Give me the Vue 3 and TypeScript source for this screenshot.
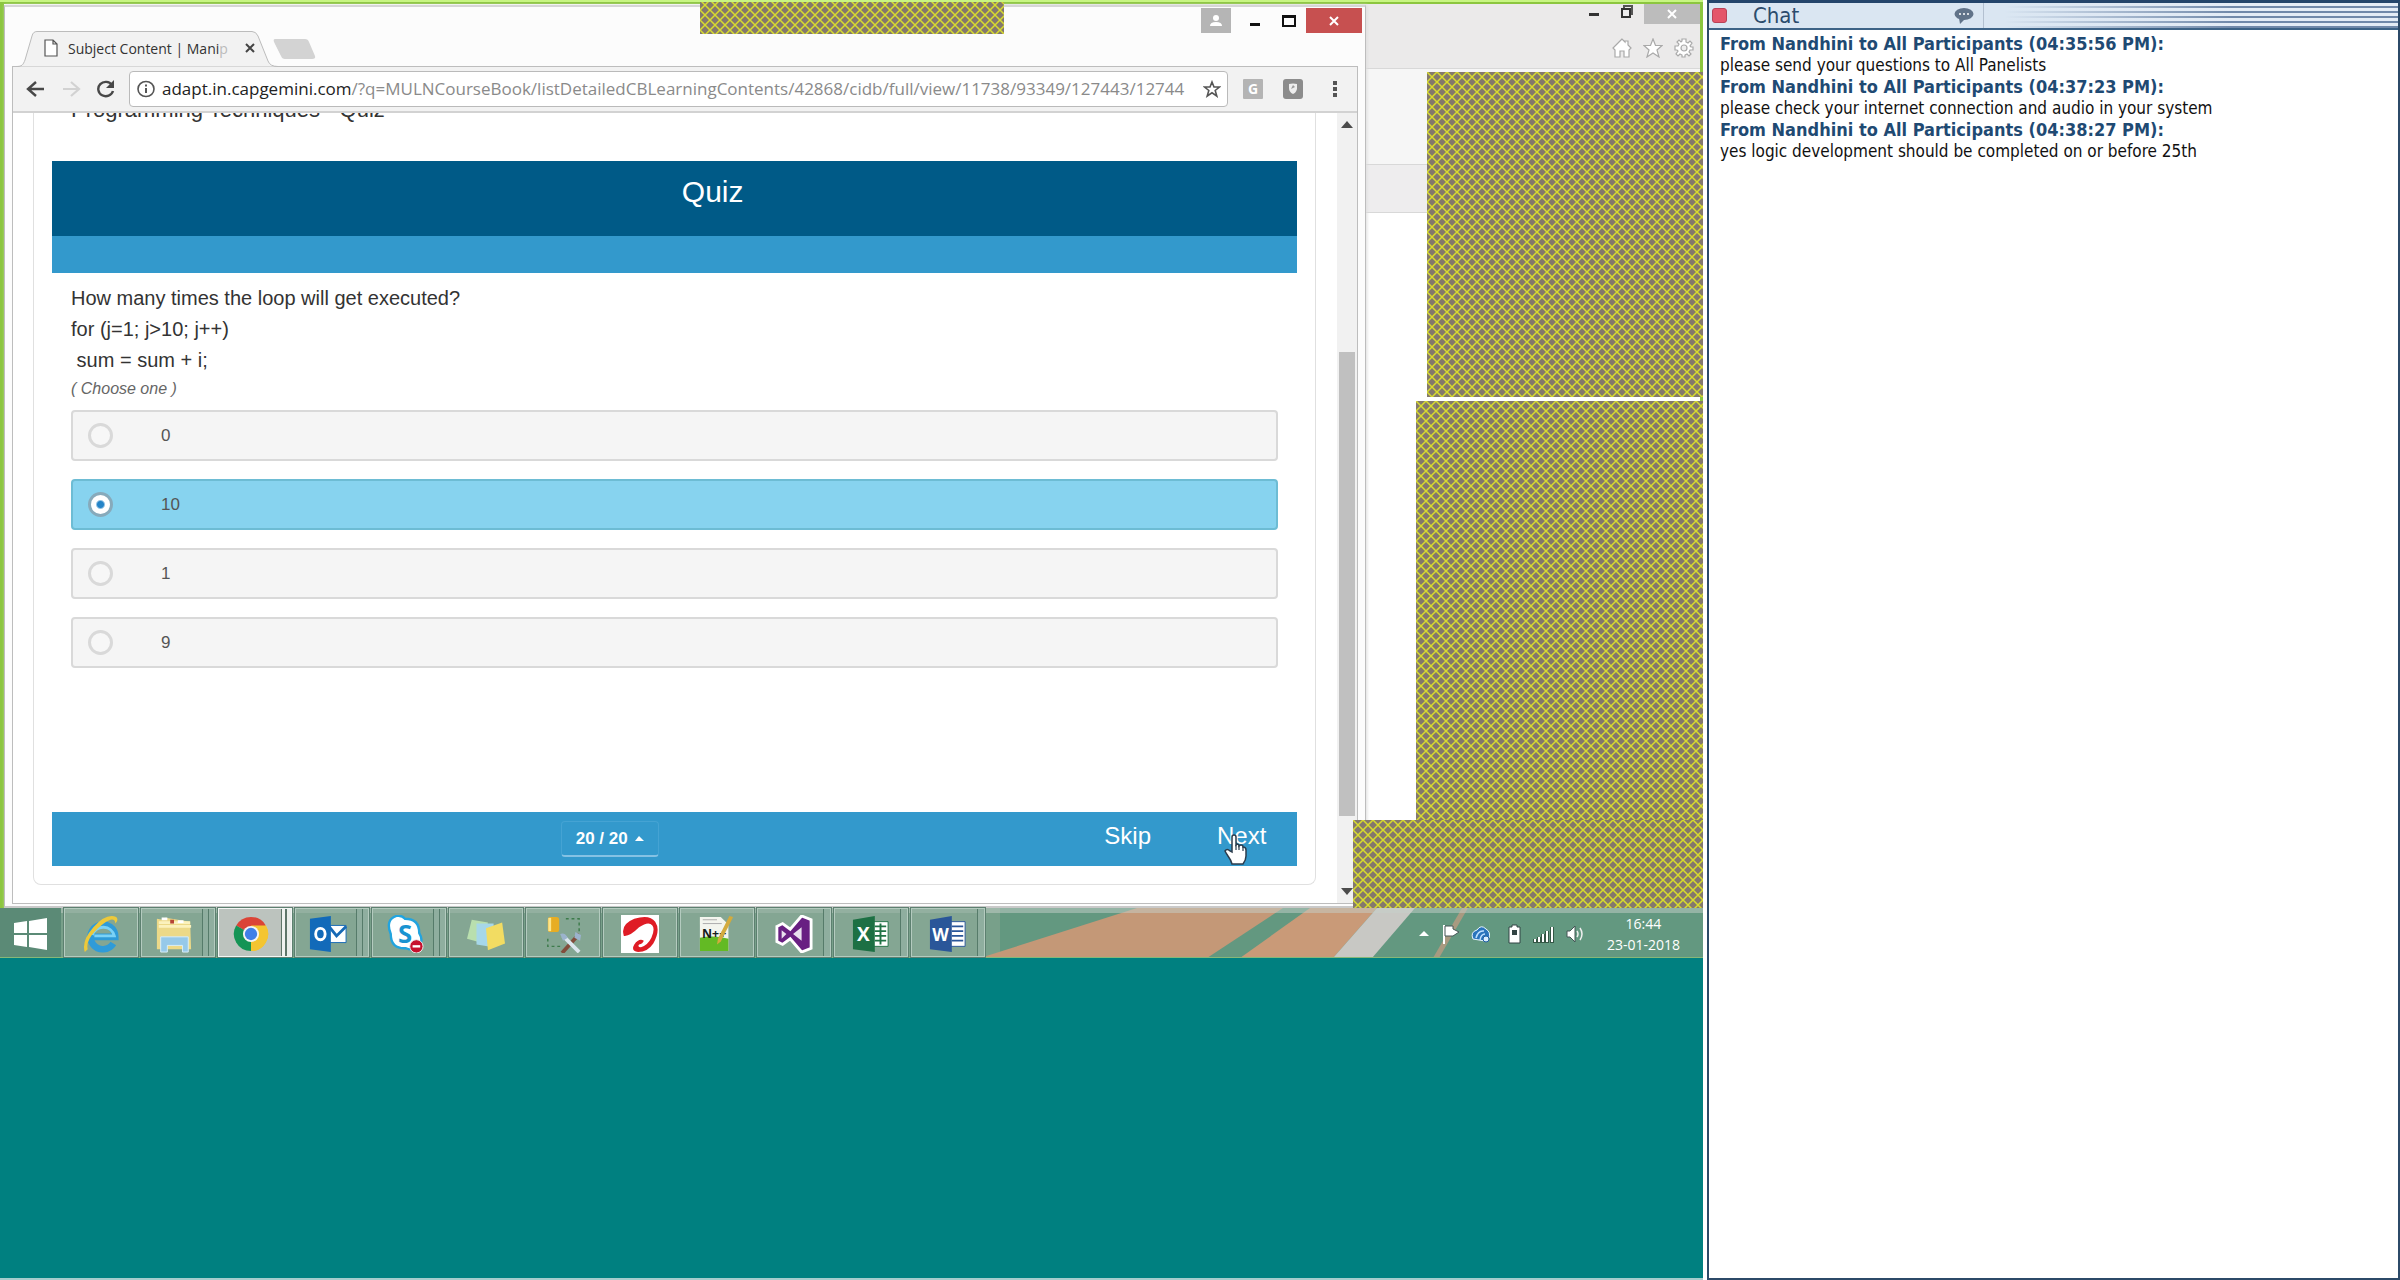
<script setup lang="ts">
import { ref } from 'vue'

interface Option { id: string; label: string }
interface Message { id: number; from: string; text: string }
interface TaskApp { id: string; name: string; active?: boolean; stack?: number }

const options: Option[] = [
  { id: 'opt-a', label: '0' },
  { id: 'opt-b', label: '10' },
  { id: 'opt-c', label: '1' },
  { id: 'opt-d', label: '9' },
]
const selected = ref('opt-b')

const messages: Message[] = [
  { id: 1, from: 'From Nandhini to All Participants (04:35:56 PM):', text: 'please send your questions to All Panelists' },
  { id: 2, from: 'From Nandhini to All Participants (04:37:23 PM):', text: 'please check your internet connection and audio in your system' },
  { id: 3, from: 'From Nandhini to All Participants (04:38:27 PM):', text: 'yes logic development should be completed on or before 25th' },
]

const apps: TaskApp[] = [
  { id: 'ie', name: 'Internet Explorer' },
  { id: 'files', name: 'File Explorer', stack: 2 },
  { id: 'chrome', name: 'Chrome', active: true, stack: 2 },
  { id: 'outlook', name: 'Outlook', stack: 2 },
  { id: 'skype', name: 'Skype', stack: 2 },
  { id: 'notes', name: 'Sticky Notes' },
  { id: 'tools', name: 'Database Tools' },
  { id: 'airtel', name: 'Airtel' },
  { id: 'npp', name: 'Notepad++' },
  { id: 'vs', name: 'Visual Studio', stack: 1 },
  { id: 'excel', name: 'Excel', stack: 1 },
  { id: 'word', name: 'Word', stack: 1 },
]
</script>

<template>
  <div class="meeting">
    <main class="shared">
      <div class="screen">
        <section class="ie-window" aria-label="Background browser">
          <div class="ie-title">
            <div class="ie-controls">
              <button class="plain" aria-label="Minimize"><svg width="12" height="20"><rect x="1" y="9" width="10" height="3" fill="#333" /></svg></button>
              <button class="plain" aria-label="Restore"><svg width="14" height="20"><path d="M4 5V2h8v8h-2" fill="none" stroke="#555" stroke-width="2" /><rect x="2" y="5" width="8" height="8" fill="#eee" stroke="#333" stroke-width="2" /></svg></button>
              <button class="ie-close" aria-label="Close"><svg width="12" height="12"><path d="M2 2l8 8M10 2l-8 8" stroke="#fff" stroke-width="2" /></svg></button>
            </div>
            <div class="ie-icons">
              <svg width="20" height="20" viewBox="0 0 20 20"><path d="M10 1L1 10l2 2v7h5v-6h4v6h5v-7l2-2-3-3V3h-3v1z" fill="#fff" stroke="#a9a9a9" stroke-width="1.2" /></svg>
              <svg width="20" height="20" viewBox="0 0 20 20"><path d="M10 1l2.500 6.500H19l-5 4.500 2 7-6-4-6 4 2-7-5-4.500h6.500z" fill="#fff" stroke="#a9a9a9" stroke-width="1.200" /></svg>
              <svg width="20" height="20" viewBox="0 0 20 20"><path d="M8 1h4v3l2 1 2-2 2 2-2 3 1 1h2v3h-3l-1 2 2 2-2 2-2-2-2 1v2H8v-2l-2-1-2 2-2-2 2-3-1-1H1V8h3l1-2-2-2 2-2 2 2 1-1z" fill="#fff" stroke="#a9a9a9" stroke-width="1.200" /><circle cx="10" cy="10" r="3" fill="#eee" stroke="#a9a9a9" stroke-width="1.200" /></svg>
            </div>
          </div>
          <div class="ie-bar"></div>
          <div class="ie-strip"></div>
        </section>

        <section class="chrome-window" aria-label="Browser">
          <div class="tab-strip">
            <div class="tab">
              <svg class="tab-shape" viewBox="0 0 262 36" preserveAspectRatio="none"><path d="M0 35.500C6 35.500 7 34 9 29L16 5Q17 .5 21 .5H236Q240 .5 242 5L252 30Q254 35.500 262 35.500" fill="#f2f2f2" stroke="#bcbcbc" /></svg>
              <svg class="page-icon" width="14" height="18" viewBox="0 0 14 18"><path d="M1 1h8l4 4v12H1zM9 1v4h4" fill="#fff" stroke="#555" stroke-width="1.200" /></svg>
              <span class="tab-title">Subject Content | Mani<span class="faded">p</span></span>
              <button class="plain tab-close" aria-label="Close tab"><svg width="12" height="12"><path d="M2 2l8 8M10 2l-8 8" stroke="#444" stroke-width="2" /></svg></button>
            </div>
            <button class="plain new-tab" aria-label="New tab"><svg width="44" height="22" viewBox="0 0 44 22"><path d="M3 1h30q3 0 4 3l6 14q1 3-3 3H13q-3 0-4-3L2 4q-1-3 1-3z" fill="#d3d3d3" /></svg></button>
            <div class="win-controls">
              <button class="profile" aria-label="Profile"><svg width="14" height="14"><circle cx="7" cy="4" r="3" fill="#fff" /><path d="M1 12q0-4 6-4t6 4z" fill="#fff" /></svg></button>
              <button class="plain" aria-label="Minimize window"><svg width="12" height="26"><rect x="1" y="15" width="10" height="3" fill="#111" /></svg></button>
              <button class="plain" aria-label="Maximize window"><svg width="14" height="26"><path d="M1 8h12v10H1z" fill="none" stroke="#111" stroke-width="2" /><path d="M0 9h14" stroke="#111" stroke-width="2" /></svg></button>
              <button class="close" aria-label="Close window"><svg width="12" height="12"><path d="M2 2l8 8M10 2l-8 8" stroke="#fff" stroke-width="2" /></svg></button>
            </div>
          </div>

          <div class="frame">
            <div class="toolbar">
              <button class="plain" aria-label="Back"><svg width="20" height="18" viewBox="0 0 20 18"><path d="M18 9H3M10 2L2 9l8 7" fill="none" stroke="#484848" stroke-width="2.400" /></svg></button>
              <button class="plain" aria-label="Forward"><svg width="20" height="18" viewBox="0 0 20 18"><path d="M2 9h15M10 2l8 7-8 7" fill="none" stroke="#d2d2d2" stroke-width="2.200" /></svg></button>
              <button class="plain" aria-label="Reload"><svg width="20" height="18" viewBox="0 0 20 18"><path d="M16 5A7.500 7.200 0 1 0 17 11" fill="none" stroke="#484848" stroke-width="2.400" /><path d="M18 0v8h-8z" fill="#484848" /></svg></button>
              <div class="omnibox">
                <svg width="20" height="18" viewBox="0 0 20 18"><ellipse cx="10" cy="9" rx="8" ry="7.500" fill="none" stroke="#555" stroke-width="1.600" /><path d="M10 8v5M10 4.500v2" stroke="#555" stroke-width="2" /></svg>
                <a class="url" href="#"><span class="host">adapt.in.capgemini.com</span>/?q=MULNCourseBook/listDetailedCBLearningContents/42868/cidb/full/view/11738/93349/127443/12744</a>
                <button class="plain" aria-label="Bookmark"><svg width="18" height="18" viewBox="0 0 18 18"><path d="M9 2l2 5h5.500l-4.300 3.500 1.600 5.500L9 12.800 4.200 16l1.600-5.500L1.500 7H7z" fill="none" stroke="#555" stroke-width="1.600" /></svg></button>
              </div>
              <button class="ext" aria-label="Extension"><svg width="20" height="20"><rect width="20" height="20" rx="1" fill="#b4b4b4" /><text x="10" y="15" text-anchor="middle" class="glyph" font-size="14">G</text></svg></button>
              <button class="ext" aria-label="Shield extension"><svg width="20" height="20"><rect width="20" height="20" rx="3" fill="#8c8c8c" /><path d="M6 5q4-1 8 0v5q-1 4-4 5-4-2-4-6z" fill="#eee" /><path d="M8 10l2-4 2 2z" fill="#999" /></svg></button>
              <button class="plain menu" aria-label="Menu"><svg width="6" height="18"><rect x="1" y="1" width="4" height="4" fill="#555" /><rect x="1" y="7" width="4" height="4" fill="#555" /><rect x="1" y="13" width="4" height="4" fill="#555" /></svg></button>
            </div>

            <div class="viewport">
              <div class="page">
                <div class="card">
                  <h1>Programming Techniques - Quiz</h1>
                  <div class="quiz">
                    <h2>Quiz</h2>
                    <div class="band"></div>
                    <fieldset>
                      <legend>
                        <span>How many times the loop will get executed?</span>
                        <span>for (j=1; j&gt;10; j++)</span>
                        <span>&nbsp;sum = sum + i;</span>
                        <em>( Choose one )</em>
                      </legend>
                      <label v-for="o in options" :key="o.id" class="option" :class="{ on: selected === o.id }" :for="o.id">
                        <input :id="o.id" v-model="selected" type="radio" name="answer" :value="o.id">
                        <span>{{ o.label }}</span>
                      </label>
                    </fieldset>
                    <div class="quiz-foot">
                      <button class="counter">20 / 20 <svg width="9" height="5"><path d="M0 5l4-5 5 5z" fill="#fff" /></svg></button>
                      <div class="nav">
                        <button class="nav-btn">Skip</button>
                        <button class="nav-btn">Next
                          <svg class="hand" width="24" height="32" viewBox="0 0 24 32"><path d="M8 3q0-2 2-2t2 2v8l1-1q2 0 2 2 1-1 2-1 2 0 2 2 3 0 3 3v6q0 4-3 8H8q-1-4-4-8-2-3-3-5 2-3 5 0l2 1z" fill="#fff" stroke="#2c3c4c" stroke-width="1.500" /><path d="M12 11v5M15 12v4M19 13v4" stroke="#2c3c4c" stroke-width="1.200" /></svg>
                        </button>
                      </div>
                    </div>
                  </div>
                </div>
              </div>
              <div class="scrollbar">
                <svg width="12" height="7"><path d="M0 7l6-7 6 7z" fill="#4c4c4c" /></svg>
                <div class="track"><div class="thumb"></div></div>
                <svg width="12" height="7"><path d="M0 0h12l-6 7z" fill="#4c4c4c" /></svg>
              </div>
            </div>
          </div>
        </section>

        <svg width="0" height="0" class="defs"><defs><pattern id="hatch" width="10" height="10" patternUnits="userSpaceOnUse"><rect width="10" height="10" fill="#84796c" /><path d="M-1-1L11 11M11-1L-1 11" stroke="#d8dc2e" stroke-width="1.500" /></pattern></defs></svg>
        <svg class="mask mask-top"><rect width="100%" height="100%" fill="url(#hatch)" /></svg>
        <svg class="mask mask-upper"><rect width="100%" height="100%" fill="url(#hatch)" /></svg>
        <svg class="mask mask-middle"><rect width="100%" height="100%" fill="url(#hatch)" /></svg>
        <svg class="mask mask-lower"><rect width="100%" height="100%" fill="url(#hatch)" /></svg>
      </div>

      <nav class="taskbar" aria-label="Taskbar">
        <svg class="wall" viewBox="0 0 1703 50" preserveAspectRatio="none">
          <rect width="1703" height="50" fill="#639880" />
          <path d="M0 0H1000V50H0z" fill="#78a08a" />
          <path d="M1000 0H1137L1000 44z" fill="#639880" />
          <path d="M980 50L1137 0H1283L1207 50z" fill="#c49877" />
          <path d="M1310 0h67l-44 50h-93z" fill="#c99a78" />
          <path d="M1377 0h38l-43 50h-39z" fill="#c8c8c4" />
          <path d="M1462 0h6l-29 50h-6z" fill="#a89a80" />
          <path d="M0 0H1703V5H0z" fill="#c6d0ca" opacity=".5" />
          <path d="M0 49.500H1703" stroke="#86b878" />
        </svg>
        <button class="start" aria-label="Start"><svg width="36" height="34" viewBox="0 0 36 34"><path d="M1 6l13-2v12H1zM16 4l18-3v15H16zM1 18h13v12L1 28zM16 18h18v15l-18-3z" fill="#fff" /></svg></button>
        <button v-for="a in apps" :key="a.id" class="app" :class="[{ active: a.active }, a.stack ? 'stack' + a.stack : '']" :aria-label="a.name">
          <svg v-if="a.id === 'ie'" viewBox="0 0 40 40"><path d="M12 23H35A13 13 0 1 0 33 30" fill="none" stroke="#2f9bd8" stroke-width="7" /><path d="M13 22H34A12 12 0 0 0 11 21" fill="none" stroke="#7bd2f6" stroke-width="3" /><path d="M3 39Q-1 28 12 13T36 2q3 3-1 7 0-5-5-4-8 3-17 13T6 36z" fill="#edc93a" /></svg>
          <svg v-else-if="a.id === 'files'" viewBox="0 0 40 40"><path d="M2 4l6 1 3-2 26 4 1 29H2z" fill="#ecd988" /><path d="M4 8h33M4 12h34" stroke="#fbf2bd" stroke-width="3" /><path d="M7 4h6M24 7h6" stroke="#fff" stroke-width="3" /><path d="M16 5h4v4h-4z" fill="#b64535" /><path d="M6 23h29v16h-6v-7H13v7H6z" fill="#96c9e9" stroke="#d9effa" /></svg>
          <svg v-else-if="a.id === 'chrome'" viewBox="0 0 40 40"><path d="M20 20L4.400 11A18 18 0 0 1 35.600 11z" fill="#db4437" /><path d="M20 20L35.600 11A18 18 0 0 1 20 38z" fill="#f4c531" /><path d="M20 20v18A18 18 0 0 1 4.400 11z" fill="#149455" /><path d="M20 11h15.600a18 18 0 0 1-15.600 27l8-14z" fill="#f4c531" /><circle cx="20" cy="20" r="8.500" fill="#f4f4f4" /><circle cx="20" cy="20" r="6.500" fill="#3f7fe8" /></svg>
          <svg v-else-if="a.id === 'outlook'" viewBox="0 0 40 40"><path d="M20 11h19v18H20z" fill="#fff" stroke="#1769b5" /><path d="M21 12l8 10 10-10" fill="none" stroke="#1769b5" stroke-width="3" /><path d="M1 4l22-3v38L1 36z" fill="#126ab9" /><ellipse cx="12" cy="20" rx="5" ry="6" fill="none" stroke="#fff" stroke-width="3" /></svg>
          <svg v-else-if="a.id === 'skype'" viewBox="0 0 40 40"><path d="M11 1q6-1 9 3 15 0 15 15 5 8-1 14-6 5-13 2Q5 36 5 20-1 5 11 1z" fill="#fff" stroke="#22a4df" stroke-width="2.500" /><text x="20" y="29" text-anchor="middle" class="glyph blue" font-size="27">S</text><circle cx="32" cy="33" r="7" fill="#c6102c" stroke="#eee" /><path d="M28 33h8" stroke="#fff" stroke-width="2.500" /></svg>
          <svg v-else-if="a.id === 'notes'" viewBox="0 0 40 40"><path d="M5 5l17 3-4 22-18-5z" fill="#b9dfae" /><path d="M10 9h18v25l-18-3z" fill="#a6d7e9" /><path d="M20 14l17-6 3 22-18 7z" fill="#f2dc62" /></svg>
          <svg v-else-if="a.id === 'tools'" viewBox="0 0 40 40"><rect x="4" y="2" width="12" height="16" rx="3" fill="#e7ad24" /><path d="M6 3v14" stroke="#fce58c" stroke-width="3" /><path d="M23 4h14v14M4 25v8h14" fill="none" stroke="#3d7b4b" stroke-width="1.500" stroke-dasharray="3 3" /><path d="M19 40l18-20" stroke="#824d3c" stroke-width="4" /><path d="M20 22l17 17" stroke="#dbe6ee" stroke-width="4" /><path d="M17 20q5-2 8 4l-5 3zM33 18l6 3-1 6-6-3z" fill="#9bb3cc" /></svg>
          <svg v-else-if="a.id === 'airtel'" viewBox="0 0 40 40"><path d="M0 0h40v40H0z" fill="#fff" /><path d="M3 22Q-1 10 14 4 30-1 36 7q6 9-2 23-6 9-16 9-8-1-4-8 5-7 10-4-1 3-5 4-2 3 2 3 7-2 11-10 4-9 1-13-4-5-14 2Q9 23 3 22z" fill="#df1c25" /></svg>
          <svg v-else-if="a.id === 'npp'" viewBox="0 0 40 40"><path d="M2 2h22l8 8v28H2z" fill="#f3f5ee" /><path d="M2 24q15-3 30 1v13H2z" fill="#63ba24" /><text x="17" y="24" text-anchor="middle" class="glyph dark" font-size="13">N++</text><path d="M37 2L24 28l-4 3 1-6L33 1z" fill="#d3ab3d" /><path d="M5 5h15M5 9h20" stroke="#aaa" /></svg>
          <svg v-else-if="a.id === 'vs'" viewBox="0 0 40 40"><path d="M2 12l6-3 8 6L28 1l10 4v30l-10 4-12-14-8 6-6-3z" fill="#681f82" stroke="#fff" stroke-width="3" /><path d="M7 16v9l5-5zM28 13v14l-9-7z" fill="#e9e0ee" /></svg>
          <svg v-else-if="a.id === 'excel'" viewBox="0 0 40 40"><path d="M21 7h17v26H21z" fill="#fff" stroke="#217346" /><path d="M24 12h12M24 17h12M24 22h12M24 27h12M30 9v22" stroke="#217346" stroke-width="2" /><path d="M1 5l23-4v38L1 36z" fill="#1d7044" /><text x="12" y="27" text-anchor="middle" class="glyph" font-size="20">X</text></svg>
          <svg v-else viewBox="0 0 40 40"><path d="M21 7h17v26H21z" fill="#fff" stroke="#2a5699" /><path d="M24 12h12M24 17h12M24 22h12M24 27h12" stroke="#2a5699" stroke-width="2" /><path d="M1 5l23-4v38L1 36z" fill="#2a5699" /><text x="12" y="27" text-anchor="middle" class="glyph" font-size="18">W</text></svg>
        </button>
        <div class="tray">
          <svg width="10" height="8"><path d="M0 6l5-5 5 5z" fill="#fff" /></svg>
          <svg width="20" height="20"><path d="M4 1v19" stroke="#fff" stroke-width="2" /><path d="M5 2h8v3l6 3-6 4H5z" fill="#fff" stroke="#455" /></svg>
          <svg width="20" height="20"><path d="M2 15Q-1 8 6 6q4-6 9-1 5 3 3 9l-4 3z" fill="#2a74bc" stroke="#e8f4ff" /><path d="M5 14q2-8 8-7M9 16q1-6 5-6" fill="none" stroke="#bfe0ff" stroke-width="1.500" /><circle cx="15" cy="15" r="3" fill="#dbeeff" stroke="#1d5da4" /></svg>
          <svg width="20" height="20"><path d="M10 1h5v2h3v16H7V3h3z" fill="#fff" stroke="#344" /><path d="M10 6h5v5h-5z" fill="#344" /></svg>
          <svg width="22" height="18"><path d="M2 14v4M6 12v6M10 9v9M14 6v12M19 2v16" stroke="#354" stroke-width="4" /><path d="M2 14v3M6 12v5M10 9v8M14 6v11M19 2v15" stroke="#fff" stroke-width="2" /></svg>
          <svg width="18" height="18"><path d="M1 6h3l5-5v16l-5-5H1z" fill="#fff" stroke="#455" /><path d="M11 6q2 3 0 6M14 3q4 6 0 12" fill="none" stroke="#eee" stroke-width="1.500" /></svg>
          <time class="clock" datetime="2018-01-23T16:44"><span>16:44</span><span>23-01-2018</span></time>
        </div>
      </nav>
    </main>

    <aside class="chat" aria-label="Chat panel">
      <header>
        <i class="mark"></i>
        <h2>Chat</h2>
        <svg width="20" height="18" viewBox="0 0 20 18"><ellipse cx="10" cy="7" rx="9.500" ry="6" fill="#617389" /><path d="M5 11l1 6 5-5z" fill="#617389" /><path d="M5 7h2M9 7h2M13 7h2" stroke="#fff" stroke-width="1.500" /></svg>
        <div class="stripes"></div>
      </header>
      <div class="log">
        <article v-for="m in messages" :key="m.id">
          <strong>{{ m.from }}</strong>
          <p>{{ m.text }}</p>
        </article>
      </div>
    </aside>
  </div>
</template>

<style>
body {
  margin: 0;
  background: #fff;
}
</style>

<style scoped>
* {
  box-sizing: border-box;
}
.meeting {
  display: flex;
  gap: 4px;
  min-height: 100vh;
  font-family: "Liberation Sans", sans-serif;
}
button {
  margin: 0;
  padding: 0;
  border: 0;
  font: inherit;
}
svg {
  display: block;
  flex: none;
}
.glyph {
  fill: #fff;
  font-family: "Open Sans", sans-serif;
  font-weight: 700;
}
.glyph.blue {
  fill: #1993d1;
}
.glyph.dark {
  fill: #17201b;
}
.plain {
  display: flex;
  background: none;
}
.shared {
  display: flex;
  flex: 1;
  min-width: 0;
  flex-direction: column;
  background: #008080;
  border-bottom: 2px solid #a5cccc;
}
.screen {
  position: relative;
  height: 908px;
  overflow: hidden;
  background: #fff;
  border-top: 2px solid #c8f583;
  box-shadow: inset 4px 2px #8cc63f;
}
.defs,
.mask {
  position: absolute;
}
.mask-top {
  top: -2px;
  left: 700px;
  width: 304px;
  height: 34px;
}
.mask-upper {
  top: 70px;
  right: 0;
  width: 276px;
  height: 325px;
}
.mask-middle {
  top: 399px;
  right: 0;
  width: 287px;
  height: 420px;
}
.mask-lower {
  top: 818px;
  right: 0;
  width: 350px;
  height: 89px;
}

/* background browser */
.ie-window {
  position: absolute;
  top: 0;
  right: 0;
  bottom: 0;
  left: 50%;
  background: #fff;
  border: 2px solid #8cc63f;
  border-width: 2px 3px 0 0;
}
.ie-title {
  height: 65px;
  background: #ebeaea;
  border-bottom: 1px solid #d8d8d8;
}
.ie-controls {
  display: flex;
  justify-content: flex-end;
  height: 20px;
  gap: 20px;
}
.ie-close {
  display: flex;
  align-items: center;
  justify-content: center;
  width: 56px;
  margin-left: -10px;
  background: #bcbcbc;
}
.ie-icons {
  display: flex;
  justify-content: flex-end;
  gap: 11px;
  padding: 14px 6px 0;
}
.ie-bar {
  height: 95px;
  background: #f6f6f6;
}
.ie-strip {
  height: 49px;
  background: #eeedee;
  border: 1px solid #d8d8d8;
  border-width: 1px 0;
}

/* foreground browser */
.chrome-window {
  position: absolute;
  top: 3px;
  bottom: 0;
  left: 4px;
  display: flex;
  width: 80%;
  flex-direction: column;
  padding: 1px 7px 2px;
  background: #fcfcfc;
  border: 1px solid #bdbdbd;
  border-top: 2px solid #d6d6d6;
  border-bottom: 2px solid #c9c9c9;
  box-shadow: 1px 0 3px #ddd;
}
.tab-strip {
  z-index: 1;
  display: flex;
  height: 59px;
  margin-bottom: -1px;
  align-items: flex-end;
}
.tab {
  position: relative;
  display: flex;
  width: 262px;
  height: 36px;
  margin-left: 4px;
  align-items: center;
  padding: 0 22px 2px 28px;
}
.tab-shape {
  position: absolute;
  top: 0;
  left: 0;
  width: 100%;
  height: 100%;
}
.page-icon,
.tab-title,
.tab-close {
  z-index: 1;
}
.tab-title {
  flex: 1;
  margin-left: 10px;
  color: #333;
  font: 14px "Open Sans", sans-serif;
  white-space: nowrap;
}
.faded {
  color: #bbb;
}
.new-tab {
  align-self: flex-end;
  margin: 0 0 7px -6px;
}
.win-controls {
  display: flex;
  height: 25px;
  margin: 0 -4px 0 auto;
  align-self: flex-start;
}
.win-controls .plain {
  width: 34px;
  justify-content: center;
}
.profile,
.close {
  display: flex;
  align-items: center;
  justify-content: center;
}
.profile {
  width: 30px;
  margin-right: 7px;
  background: #b5b5b5;
}
.close {
  width: 56px;
  background: #c75050;
}
.frame {
  display: flex;
  flex: 1;
  min-height: 0;
  flex-direction: column;
  background: #fff;
  border: 1px solid #bdbdbd;
}
.toolbar {
  display: flex;
  flex: none;
  height: 46px;
  align-items: center;
  gap: 15px;
  padding: 0 14px 0 13px;
  background: #f2f2f2;
  border-bottom: 2px solid #d2d2d2;
}
.omnibox {
  display: flex;
  flex: 1;
  min-width: 0;
  height: 36px;
  margin-left: -2px;
  align-items: center;
  padding: 0 6px;
  background: #fff;
  border: 1px solid #bababa;
  border-radius: 4px;
}
.url {
  flex: 1;
  min-width: 0;
  overflow: hidden;
  margin-left: 6px;
  color: #8a8a8a;
  font: 17px/24px "Open Sans", sans-serif;
  text-decoration: none;
  white-space: nowrap;
}
.host {
  color: #222;
}
.ext {
  width: 20px;
  height: 20px;
  background: none;
}
.ext + .ext {
  margin-left: 5px;
}
.menu {
  margin: 0 5px 0 14px;
}
.viewport {
  display: flex;
  flex: 1;
  min-height: 0;
}
.page {
  display: flex;
  flex: 1;
  flex-direction: column;
  justify-content: flex-end;
  overflow: hidden;
  padding: 0 21px 18px 20px;
}
.card {
  padding: 0 18px 18px;
  border: 1px solid #e0e0e0;
  border-radius: 0 0 8px 8px;
  border-top: 0;
}
h1 {
  margin: 0 0 35px 19px;
  color: #333;
  font-size: 22px;
  font-weight: 400;
  line-height: 32px;
}
.quiz h2 {
  height: 75px;
  margin: 0;
  padding: 12px 0 0 76px;
  background: #005a87;
  color: #fff;
  font-size: 30px;
  font-weight: 400;
  line-height: 38px;
  text-align: center;
}
.band {
  height: 37px;
  background: #3399cc;
}
fieldset {
  display: flex;
  height: 539px;
  margin: 0;
  flex-direction: column;
  gap: 18px;
  padding: 0 19px;
  border: 0;
}
legend {
  display: flex;
  width: 100%;
  flex-direction: column;
  padding: 10px 0 8px;
  color: #333;
  font-size: 20px;
  line-height: 31px;
}
legend em {
  color: #666;
  font-size: 16px;
  line-height: 26px;
}
.option {
  display: flex;
  height: 51px;
  flex: none;
  align-items: center;
  gap: 48px;
  padding: 0 15px;
  background: #f5f5f5;
  border: 2px solid #d9d9d9;
  border-radius: 4px;
  color: #555;
  font-size: 17px;
}
.option.on {
  background: #87d3ef;
  border-color: #6dbcd4;
}
.option input {
  width: 25px;
  height: 25px;
  margin: 0;
  appearance: none;
  background: #f7f7f7;
  border: 3px solid #d9d9d9;
  border-radius: 50%;
}
.option input:checked {
  background: radial-gradient(circle, #2484c8 3px, #fff 5px);
  border-color: #87aabb;
}
.quiz-foot {
  display: grid;
  height: 54px;
  grid-template-columns: 1fr auto 1fr;
  align-items: center;
  background: #3399cc;
}
.counter {
  display: flex;
  grid-column: 2;
  width: 98px;
  height: 36px;
  margin-right: 130px;
  align-items: center;
  justify-content: center;
  gap: 7px;
  background: none;
  border: 1px solid #45a3d3;
  border-bottom: 2px solid #85c2e4;
  border-radius: 4px;
  color: #fff;
  font-size: 17px;
  font-weight: 700;
}
.nav {
  display: flex;
  grid-column: 3;
  justify-content: flex-end;
  gap: 66px;
  padding: 0 31px 6px 0;
}
.nav-btn {
  position: relative;
  background: none;
  color: #fff;
  font-size: 24px;
}
.hand {
  position: absolute;
  top: 12px;
  left: 7px;
}
.scrollbar {
  display: flex;
  width: 20px;
  flex-direction: column;
  align-items: center;
  justify-content: space-between;
  padding: 8px 0;
  background: #f1f1f1;
}
.track {
  width: 16px;
  height: 468px;
  margin-top: 156px;
}
.thumb {
  height: 464px;
  background: #c0c0c0;
}

/* taskbar */
.taskbar {
  position: relative;
  display: flex;
  height: 50px;
  gap: 3px;
}
.wall {
  position: absolute;
  width: 100%;
  height: 100%;
}
.start,
.app {
  z-index: 1;
  display: flex;
  height: 49px;
  align-items: center;
  padding-top: 2px;
}
.start {
  width: 61px;
  padding-left: 13px;
  background: #5b8a76;
}
.app {
  width: 74px;
  justify-content: center;
  background: rgb(140 170 154 / 60%);
  border: 1px solid #b4cbbf;
  outline: 1px solid #5d8070;
}
.app svg {
  width: 38px;
  height: 38px;
}
.app.stack1 {
  box-shadow: inset -6px 0 #8fae9f, inset -7px 0 #567b6a;
}
.app.stack2 {
  padding-right: 8px;
  box-shadow: inset -5px 0 #8fae9f, inset -6px 0 #567b6a, inset -11px 0 #8fae9f, inset -12px 0 #567b6a;
}
.app.active {
  background: #bcc3be;
  border-color: #f4f6f5;
  box-shadow: inset -4px 0 #e9eeeb, inset -6px 0 #5d7569, inset -9px 0 #f0f3f1, inset -10px 0 #5d7569;
}
.tray {
  z-index: 1;
  display: flex;
  margin-left: auto;
  align-items: center;
  gap: 11px;
  padding: 2px 23px 0 0;
}
.clock {
  display: flex;
  margin-left: 12px;
  flex-direction: column;
  color: #fff;
  font: 14px/21px "Open Sans", sans-serif;
  text-align: center;
}

/* chat */
.chat {
  display: flex;
  width: calc(29% - 3px);
  flex: none;
  flex-direction: column;
  background: #fff;
  border: 2px solid #2c4a68;
  border-top: 3px solid #24456b;
  font-family: "DejaVu Sans Condensed", "DejaVu Sans", sans-serif;
}
.chat header {
  display: flex;
  height: 27px;
  align-items: center;
  padding-left: 3px;
  background: #dae6f2;
  border-bottom: 2px solid #3d6387;
}
.mark {
  width: 15px;
  height: 15px;
  background: #e4566a;
  border: 1px solid #b94257;
  border-radius: 3px;
}
.chat h2 {
  width: 201px;
  margin: 0 0 0 26px;
  color: #2c4c6c;
  font-size: 22px;
  font-weight: 400;
  line-height: 24px;
}
.stripes {
  align-self: stretch;
  flex: 1;
  margin-left: 9px;
  background: linear-gradient(90deg, #dae6f2 5%, transparent 60%), repeating-linear-gradient(#e4ecf6 0 3px, #7189aa 3px 5px);
  border-left: 1px solid #b3c0d0;
}
.log {
  padding: 3px 11px;
  color: #111;
  font-size: 17px;
  line-height: 21px;
}
.log strong {
  display: block;
  color: #1f4a73;
  font-size: 18px;
  line-height: 22px;
}
.log p {
  margin: 0;
}
</style>
